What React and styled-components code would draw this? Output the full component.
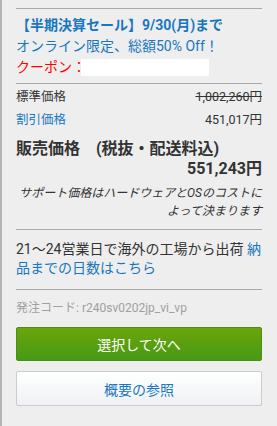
import React from "react";
import styled, { createGlobalStyle } from "styled-components";

const GlobalStyle = createGlobalStyle`
  html, body {
    margin: 0;
    padding: 0;
    background: #eeeeee;
  }
  body {
    font-family: Roboto, "Noto Sans CJK JP", sans-serif;
  }
`;

const Panel = styled.div`
  box-sizing: border-box;
  width: 277px;
  height: 426px;
  padding: 8px 15px 0 14px;
  border-left: 2px solid #b4b4b4;
  background: #eeeeee;
  color: #333;
`;

const Rule = styled.div`
  height: 1px;
  background: #aaaaaa;
`;

const Promo = styled.div`
  font-size: 14px;
  line-height: 21px;
  margin: 6px 0 5px;
`;

const PromoLine = styled.div`
  color: ${({ red }) => (red ? "#ff0000" : "#1877c0")};
  font-weight: ${({ bold }) => (bold ? 700 : 400)};
  display: flex;
  align-items: center;
  white-space: nowrap;
`;

const CouponBox = styled.span`
  display: inline-block;
  width: 128px;
  height: 17px;
  background: #ffffff;
  margin-left: -5px;
`;

const PriceRow = styled.div`
  display: flex;
  justify-content: space-between;
  font-size: 12.5px;
  line-height: 23px;
  margin-top: ${({ first }) => (first ? "1px" : "0")};
  color: ${({ blue }) => (blue ? "#1877c0" : "#333")};
  span:last-child {
    color: #333;
    text-decoration: ${({ strike }) => (strike ? "line-through" : "none")};
  }
`;

const SaleTitle = styled.div`
  font-size: 16px;
  font-weight: 700;
  line-height: 20px;
  margin-top: 8px;
  white-space: nowrap;
`;

const SalePrice = styled.div`
  font-size: 16px;
  font-weight: 700;
  line-height: 20px;
  text-align: right;
`;

const Note = styled.div`
  font-size: 12px;
  font-style: italic;
  line-height: 18px;
  text-align: right;
  margin: 5px 0 9px;
  color: #333;
`;

const Delivery = styled.p`
  font-size: 14px;
  line-height: 19px;
  margin: 10px 0 11px;
`;

const DeliveryLink = styled.a`
  color: #1877c0;
  text-decoration: none;
`;

const Code = styled.div`
  font-size: 12px;
  line-height: 18px;
  color: #a0a0a0;
  margin: 9px 0 10px;
`;

const Button = styled.button`
  display: block;
  box-sizing: border-box;
  width: 100%;
  height: ${({ primary }) => (primary ? "34px" : "35px")};
  margin-bottom: 10px;
  border-radius: 2px;
  font-family: Roboto, "Noto Sans CJK JP", sans-serif;
  font-size: 14px;
  cursor: pointer;
  border: 1px solid ${({ primary }) => (primary ? "#4a8f12" : "#cccccc")};
  color: ${({ primary }) => (primary ? "#ffffff" : "#1877c0")};
  background: ${({ primary }) =>
    primary
      ? "linear-gradient(to bottom, #6ba50b, #479916)"
      : "linear-gradient(to bottom, #ffffff, #eef1f4)"};
`;

export default function App() {
  return (
    <>
      <GlobalStyle />
      <Panel>
        <Rule />
        <Promo>
          <PromoLine bold>【半期決算セール】9/30(月)まで</PromoLine>
          <PromoLine>オンライン限定、総額50% Off！</PromoLine>
          <PromoLine red>
            クーポン：<CouponBox />
          </PromoLine>
        </Promo>
        <Rule />
        <PriceRow strike first>
          <span>標準価格</span>
          <span>1,002,260円</span>
        </PriceRow>
        <PriceRow blue>
          <span>割引価格</span>
          <span>451,017円</span>
        </PriceRow>
        <SaleTitle>販売価格　(税抜・配送料込)</SaleTitle>
        <SalePrice>551,243円</SalePrice>
        <Note>
          サポート価格はハードウェアとOSのコストに
          <br />
          よって決まります
        </Note>
        <Rule />
        <Delivery>
          21～24営業日で海外の工場から出荷{" "}
          <DeliveryLink href="#">納品までの日数はこちら</DeliveryLink>
        </Delivery>
        <Rule />
        <Code>発注コード: r240sv0202jp_vi_vp</Code>
        <Button primary>選択して次へ</Button>
        <Button>概要の参照</Button>
      </Panel>
    </>
  );
}
